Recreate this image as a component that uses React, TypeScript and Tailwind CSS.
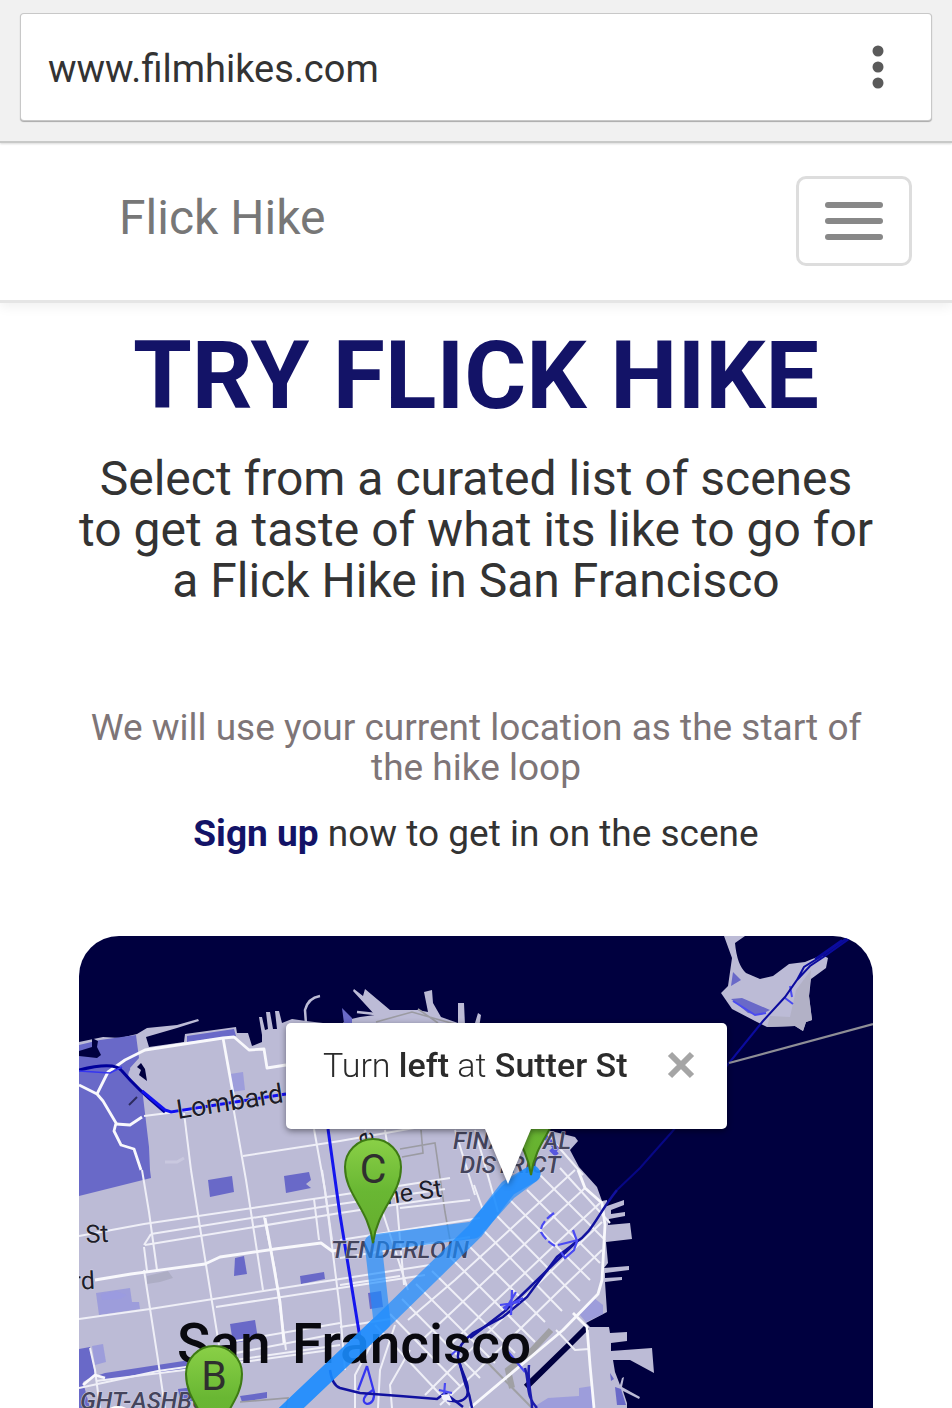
import { useState } from "react";

const land =
  "M79 1042 103 1037 120 1038 137 1034 147 1028 167 1026 177 1025 198 1019 199 1021 177 1028 146 1037 149 1047 184 1042 185 1034 236 1027 237 1033 248 1033 252 1046 262 1042 262 1035 259 1017 262 1017 265 1030 268 1029 266 1012 270 1012 273 1029 277 1029 275 1011 279 1011 282 1023 292 1019 306 1021 340 1025 347 1020 360 1017 375 1015 353 991 354 989 363 996 365 989 390 1010 418 1010 428 1012 424 992 432 990 433 1003 441 1017 458 1023 458 1003 464 1003 465 1025 475 1023 478 1013 481 1015 479 1028 510 1065 547 1130 575 1137 578 1141 570 1150 579 1167 597 1187 602 1201 607 1200 607 1206 624 1200 624 1205 611 1210 611 1214 625 1212 625 1216 609 1219 608 1225 630 1223 632 1239 606 1242 608 1263 604 1268 629 1266 629 1270 605 1273 605 1278 622 1277 622 1280 605 1282 607 1312 586 1323 590 1327 609 1327 610 1333 627 1332 627 1341 611 1343 611 1351 652 1348 654 1373 630 1360 613 1360 615 1372 620 1385 622 1378 624 1377 622 1387 640 1397 639 1399 623 1391 627 1403 627 1408 79 1408Z";

const parks = [
  "M79 1045 100 1040 136 1035 139 1058 130 1068 133 1080 142 1088 149 1147 150 1170 151 1178 79 1196Z",
  "M187 1036 234 1029 236 1036 187 1042Z",
  "M208 1180 232 1176 234 1192 210 1197Z",
  "M284 1176 309 1172 311 1180 306 1184 311 1188 286 1193Z",
  "M235 1258 244 1256 247 1274 234 1276Z",
  "M300 1276 324 1272 325 1279 301 1284Z",
  "M230 1324 255 1320 258 1339 233 1343Z",
  "M79 1349 90 1347 95 1375 83 1382 90 1408 79 1408Z",
  "M105 1373 190 1360 190 1369 108 1380 96 1376Z",
  "M178 1389 202 1386 202 1402 180 1400Z",
  "M240 1396 267 1392 267 1398 242 1402Z",
  "M368 1293 381 1291 383 1307 370 1309Z",
  "M615 1387 621 1389 626 1405 617 1405Z",
  "M610 1373 614 1379 611 1381Z",
  "M342 1008 352 1018 352 1023 344 1023Z",
];

const palePatches = [
  "M96 1293 130 1288 132 1302 139 1302 140 1309 99 1315Z",
  "M92 1346 103 1344 106 1362 95 1365Z",
  "M230 1074 243 1072 245 1090 232 1092Z",
  "M579 1314 594 1298 603 1305 603 1314 586 1322Z",
  "M532 1408 548 1398 579 1396 579 1388 592 1386 594 1408Z",
];

const thinStreets = [
  "M79 1236 144 1224 340 1195 450 1178",
  "M151 1234 340 1204 445 1189",
  "M145 1245 340 1213 440 1198",
  "M79 1319 150 1309 340 1279 430 1265",
  "M216 1307 340 1288 425 1275",
  "M79 1388 158 1371 340 1345",
  "M96 1381 200 1368 330 1350",
  "M340 1323 230 1342",
  "M340 1333 215 1357",
  "M142 1170 149 1212 157 1270",
  "M191 1170 202 1240 219 1345",
  "M184 1113 191 1170",
  "M233 1106 246 1180 263 1290",
  "M314 1129 325 1190 340 1310 345 1370",
  "M144 1270 158 1360 165 1408",
  "M264 1217 275 1270 286 1350",
  "M314 1199 319 1240",
  "M322 1170 332 1240",
  "M243 1156 340 1141 420 1127",
  "M144 1247 147 1271",
  "M151 1234 144 1245",
  "M144 1116 200 1109",
  "M340 1240 480 1218 M340 1258 470 1237",
  "M340 1285 400 1276 M340 1327 390 1319",
  "M365 1130 382 1210 408 1290 M385 1130 397 1205 404 1285",
  "M474 1185 483 1210 M490 1183 498 1212",
  "M455 1130 475 1195 M475 1130 490 1183",
  "M400 1208 470 1200",
  "M371 1345 355 1375 355 1408 M395 1325 380 1370 378 1408",
  "M410 1350 390 1385 392 1408",
  "M90 1348 95 1370 100 1408",
  "M600 1203 560 1240 485 1311 450 1345",
  "M585 1188 545 1225 470 1295 422 1340",
  "M602 1250 560 1290 478 1370 440 1405",
  "M575 1170 540 1202 455 1280 408 1320",
  "M602 1222 540 1282 450 1370 425 1395",
  "M560 1168 610 1223",
  "M540 1175 605 1240",
  "M527 1190 600 1263",
  "M510 1200 590 1280",
  "M496 1215 580 1301",
  "M483 1230 562 1311",
  "M465 1242 545 1322",
  "M448 1255 535 1342",
  "M432 1271 515 1353",
  "M416 1284 495 1363",
  "M402 1299 480 1378",
  "M390 1314 460 1386",
  "M375 1325 450 1405",
  "M548 1135 583 1175",
  "M556 1330 575 1350 589 1349",
];

const boldStreets = [
  "M79 1085 97 1094 103 1101 116 1123 114 1131 121 1145 134 1149 141 1170",
  "M97 1094 108 1072 125 1060 145 1050 223 1038 234 1037 249 1050 264 1049 267 1068 286 1065",
  "M223 1038 236 1110",
  "M116 1124 130 1125 142 1117",
  "M95 1280 131 1274 205 1264 220 1257 275 1249 321 1243 332 1251 340 1250",
  "M265 1218 270 1245 280 1302 284 1343",
  "M83 1385 95 1375 105 1378",
  "M578 1170 585 1188 602 1203 605 1225 602 1280 598 1294 563 1330 470 1408",
  "M573 1313 587 1327 590 1365 594 1408",
];

const highways = [
  "M330 1370Q332 1385 340 1388L360 1393 400 1396 437 1399 445 1393 463 1407",
  "M617 1190C597 1215 593 1232 575 1243L557 1257 527 1297 503 1317 473 1333Q457 1345 458 1357L465 1383Q470 1395 472 1408",
  "M575 1243 530 1287 505 1311 470 1338M459 1362C465 1380 470 1385 467 1396 462 1403 456 1402 447 1400",
];

function Pin({ x, y, letter }: { x: number; y: number; letter?: string }) {
  return (
    <g transform={`translate(${x} ${y})`}>
      <path
        d="M0 105C-5 69-28 57-28 29A28 28 0 0 1 28 29C28 57 5 69 0 105Z"
        fill="url(#pin)"
        stroke="#3e7a14"
        strokeWidth="2"
      />
      {letter && (
        <text x="0" y="45" textAnchor="middle" fontSize="41" fill="#2f2f2f">
          {letter}
        </text>
      )}
    </g>
  );
}

function CityMap() {
  return (
    <svg
      viewBox="79 936 794 472"
      preserveAspectRatio="xMidYMin slice"
      className="block h-full w-full font-['Roboto',sans-serif]"
      role="img"
      aria-label="Map of San Francisco"
    >
      <defs>
        <linearGradient id="pin" x1="0" y1="0" x2="0" y2="1">
          <stop offset="0" stopColor="#8ad047" />
          <stop offset="0.5" stopColor="#69b733" />
          <stop offset="1" stopColor="#65ad2d" />
        </linearGradient>
      </defs>
      <rect x="79" y="936" width="794" height="472" fill="#00003f" />
      <path d={land} fill="#bcbbd6" />
      <path d="M306 1024 305 1010Q308 998 320 996" fill="none" stroke="#bcbbd6" strokeWidth="2.5" />
      <path d="M357 1012 375 1014 377 1023" fill="none" stroke="#bcbbd6" strokeWidth="2.5" />
      {parks.map((d) => (
        <path key={d} d={d} fill="#6969c8" />
      ))}
      {palePatches.map((d) => (
        <path key={d} d={d} fill="#9393dc" fillOpacity="0.75" />
      ))}
      <path d="M101 1294 116 1291 127 1295 120 1299 102 1300Z" fill="#9b9be0" />
      <path d="M147 1276 168 1271 173 1278 160 1282 147 1284Z" fill="#adadc4" />
      <path d="M165 1162H177L184 1158" fill="none" stroke="#c9c8df" strokeWidth="3" />
      <path d="M79 1051 92 1047 92 1038 98 1041 97 1047 101 1055 97 1058 79 1056Z" fill="#00003f" />
      <path d="M137 1067Q126 1075 136 1083L144 1088" fill="none" stroke="#bcbbd6" strokeWidth="6" />
      <path d="M137 1067 141 1063 145 1069 147 1081 139 1075 141 1070Z" fill="#00003f" />
      <path d="M129 1105 137 1097" stroke="#2c2b5e" strokeWidth="2" />
      <path d="M587 1327 570 1344 526 1387" stroke="#00003f" strokeWidth="6" fill="none" />

      <g fill="none" stroke="#9b9ba2" strokeWidth="1.6">
        <path d="M376 1022 412 1012 440 1020 455 1024M418 1009 438 1023" />
        <path d="M421 1130 423 1153 402 1157M400 1149 435 1143 445 1212 450 1240" />
        <path d="M240 1402 288 1398 286 1408" />
      </g>
      <path d="M551 1330 525 1358M518 1362 508 1370 512 1388" stroke="#a0a0a4" strokeWidth="6" fill="none" />
      <path d="M485 1360 532 1408" stroke="#a0a0a4" strokeWidth="2" fill="none" />

      <g fill="none" stroke="#efeff7" strokeWidth="2" strokeLinejoin="round">
        {thinStreets.map((d) => (
          <path key={d} d={d} />
        ))}
      </g>
      <g fill="none" stroke="#f8f8fc" strokeWidth="2.8" strokeLinejoin="round">
        {boldStreets.map((d) => (
          <path key={d} d={d} />
        ))}
      </g>

      <path
        d="M724 936 745 936 735 943Q737 965 746 973L760 979 773 976 789 964 805 962 822 955 828 958 826 968 811 979 809 996 812 1020 806 1022 803 1031 795 1026 767 1027 755 1021 732 1009 721 993 728 986 732 958Z"
        fill="#bcbbd6"
      />
      <path d="M811 970 809 996 812 1020 806 1022 803 1031 795 1026 767 1027 770 1016 790 1017 796 990Z" fill="#b2b1c6" />
      <path d="M733 972 741 980 731 986Z M731 999 742 998 770 1010 760 1015 748 1013Z" fill="#6969c8" />
      <path d="M790 986 792 997M785 998 793 1004M733 1001 755 1015 766 1013" stroke="#4a4af0" strokeWidth="2" fill="none" />
      <path
        d="M849 939 825 956 810 966 797 980 785 997 763 1021 729 1063M847 938 820 957 804 967 797 980M842 940 815 959"
        stroke="#0b0b9e"
        strokeWidth="2"
        fill="none"
      />
      <path d="M729 1063 671 1133 640 1168 617 1190" stroke="#070785" strokeWidth="2" fill="none" />
      <path d="M729 1063 873 1024" stroke="#8e8e96" strokeWidth="2.2" />

      <path d="M79 1070Q115 1061 122 1071C140 1092 153 1102 165 1112" fill="none" stroke="#00009b" strokeWidth="3" />
      <path d="M79 1071 110 1073 122 1067" fill="none" stroke="#3535f0" strokeWidth="1.5" />
      <path d="M142 1091 165 1110 171 1112 286 1094" fill="none" stroke="#1010f0" strokeWidth="3" />
      <path d="M328 1129 340 1215 360 1338" fill="none" stroke="#1515ee" strokeWidth="3" />
      <path d="M367 1366 358 1390M367 1366 374 1392Q375 1403 367 1404 361 1402 366 1395L373 1390" fill="none" stroke="#3535f0" strokeWidth="2.2" />
      <g fill="none" stroke="#11119f" strokeWidth="2.5">
        {highways.map((d) => (
          <path key={d} d={d} />
        ))}
      </g>
      <g fill="none" stroke="#4a4af2" strokeWidth="2.2">
        <path d="M554 1213Q540 1223 541 1232 545 1240 555 1246" strokeDasharray="9 3" />
        <path d="M573 1230 577 1241 574 1250 565 1258 561 1252M558 1245 578 1240" />
        <path d="M500 1305 520 1302M512 1290 511 1315M505 1310 516 1292M503 1308 523 1298" />
        <path d="M449 1357 460 1347 467 1355M439 1390 452 1393M445 1383 444 1395M504 1347 525 1372" />
      </g>
      <path d="M525 1368C530 1385 525 1395 537 1408M529 1365C527 1385 532 1395 532 1408" fill="none" stroke="#1c1cad" strokeWidth="2.5" />
      <path d="M441 1395 449 1394 452 1401 443 1400Z" fill="#f2f2fb" />
      <path d="M543 1134 558 1150M551 1149 557 1155" stroke="#5757df" strokeWidth="5" />

      <g fontSize="24" fontStyle="italic" fontWeight="500" fill="#44445c" stroke="#d3d2e5" strokeWidth="1" paintOrder="stroke">
        <text x="453" y="1149">FINANCIAL</text>
        <text x="460" y="1173">DISTRICT</text>
        <text x="331" y="1258">TENDERLOIN</text>
        <text x="80" y="1409">GHT-ASHBURY</text>
      </g>
      <g fontSize="25" fill="#1d1d29" stroke="#d3d2e5" strokeWidth="1" paintOrder="stroke">
        <text x="178" y="1119" transform="rotate(-9 178 1119)" fontSize="27">Lombard</text>
        <text x="86" y="1243" transform="rotate(-3 86 1243)">St</text>
        <text x="73" y="1290" transform="rotate(-3 73 1290)">rd</text>
        <text x="381" y="1205" transform="rotate(-8 381 1205)">ine St</text>
        <text x="374" y="1144" transform="rotate(-98 374 1144)">e</text>
      </g>
      <text y="1363" fontSize="55" fontWeight="500" fill="#09090f">
        <tspan x="177">San </tspan>
        <tspan x="292">Francisco</tspan>
      </text>

      <g fill="none" stroke="#1a8cff" strokeLinecap="round">
        <path d="M532 1174 508 1188 475 1231 382 1322 285 1414" strokeWidth="17" strokeOpacity="0.7" strokeLinejoin="round" />
        <path d="M532 1174 508 1192 474 1230 373 1243 382 1322 285 1414" strokeWidth="17" strokeOpacity="0.66" strokeLinejoin="round" />
      </g>

      <Pin x={531} y={1070} />
      <Pin x={373} y={1138} letter="C" />
      <Pin x={214} y={1345} letter="B" />
      <ellipse cx="118" cy="1411" rx="10" ry="5" fill="#fff" />
    </svg>
  );
}

function DirectionPopup({ onClose }: { onClose: () => void }) {
  return (
    <div className="absolute top-[87px] left-[207px] w-[441px] drop-shadow-[0_2px_3px_rgba(0,0,0,0.45)]">
      <div className="flex h-[106px] items-start justify-between rounded-[5px] bg-white pt-[21px] pr-8 pl-[37px]">
        <p className="text-[34px] leading-[42px] font-light whitespace-nowrap text-[#2b2b2b]">
          Turn <b className="font-medium">left</b> at <b className="font-medium">Sutter St</b>
        </p>
        <button type="button" aria-label="Close" onClick={onClose} className="flex h-[42px] w-7 items-center justify-center">
          <svg viewBox="0 0 28 28" className="size-7" aria-hidden="true">
            <path d="M3 3 25 25M25 3 3 25" stroke="#a5a5a5" strokeWidth="6" />
          </svg>
        </button>
      </div>
      <svg viewBox="0 0 46 56" className="ml-[199px] block h-14 w-[46px]" aria-hidden="true">
        <path d="M0 0H46L23 55Z" fill="#fff" />
      </svg>
    </div>
  );
}

export default function App() {
  const [popupOpen, setPopupOpen] = useState(true);
  const [url, setUrl] = useState("www.filmhikes.com");

  return (
    <div className="bg-white font-['Roboto',sans-serif] text-[#333]">
      <header className="relative border-b-2 border-[#c8c9c8] bg-[#f1f1f1] px-[21px] pt-[14px] pb-[21px] shadow-[0_1px_2px_rgba(0,0,0,0.15)]">
        <div className="flex h-[106px] items-center rounded-[3px] bg-white pr-[35px] pl-[27px] shadow-[0_0_0_1px_#c8c8c8,0_1px_1px_1px_rgba(0,0,0,0.3)]">
          <input
            type="text"
            aria-label="Address"
            value={url}
            onChange={(e) => setUrl(e.target.value)}
            className="h-16 min-w-0 flex-1 bg-transparent pt-1 text-[38px] text-[#333] outline-none"
          />
          <button type="button" aria-label="More options" className="flex h-16 w-9 items-center justify-center">
            <svg viewBox="0 0 12 44" className="h-11 w-3" fill="#5a5a5a" aria-hidden="true">
              <circle cx="6" cy="6" r="5.5" />
              <circle cx="6" cy="22" r="5.5" />
              <circle cx="6" cy="38" r="5.5" />
            </svg>
          </button>
        </div>
      </header>

      <nav className="flex h-[160px] items-center justify-between border-b-[3px] border-[#e5e5e5] pr-10 pb-px pl-[119px] shadow-[0_3px_12px_rgba(0,0,0,0.07)]">
        <a href="#home" className="pb-1.5 text-[48px] leading-[60px] text-[#777]">
          Flick Hike
        </a>
        <button
          type="button"
          aria-label="Toggle navigation"
          className="flex h-[90px] w-[116px] flex-col items-center justify-center gap-[10px] rounded-[10px] border-[3px] border-[#ddd]"
        >
          <span className="h-[6px] w-[58px] rounded-[3px] bg-[#888]" />
          <span className="h-[6px] w-[58px] rounded-[3px] bg-[#888]" />
          <span className="h-[6px] w-[58px] rounded-[3px] bg-[#888]" />
        </button>
      </nav>

      <main className="px-[79px] pt-[21px] text-center">
        <h1 className="text-[95px] leading-[104px] font-bold whitespace-nowrap text-[#131367]">TRY FLICK HIKE</h1>
        <h2 className="-mx-[3px] mt-[25px] text-[48px] leading-[51px]">
          Select from a curated list of scenes to get a taste of what its like to go for a Flick Hike in San Francisco
        </h2>
        <p className="mt-[102px] text-[37px] leading-[40px] text-[#7e7577]">
          We will use your current location as the start of the hike loop
        </p>
        <p className="mt-[26px] text-[37px] leading-[40px]">
          <a href="#signup" className="font-bold text-[#131367]">
            Sign up
          </a>{" "}
          now to get in on the scene
        </p>
        <section className="relative mt-[82px] h-[472px] overflow-hidden rounded-t-[40px] text-left">
          <CityMap />
          {popupOpen && <DirectionPopup onClose={() => setPopupOpen(false)} />}
        </section>
      </main>
    </div>
  );
}
